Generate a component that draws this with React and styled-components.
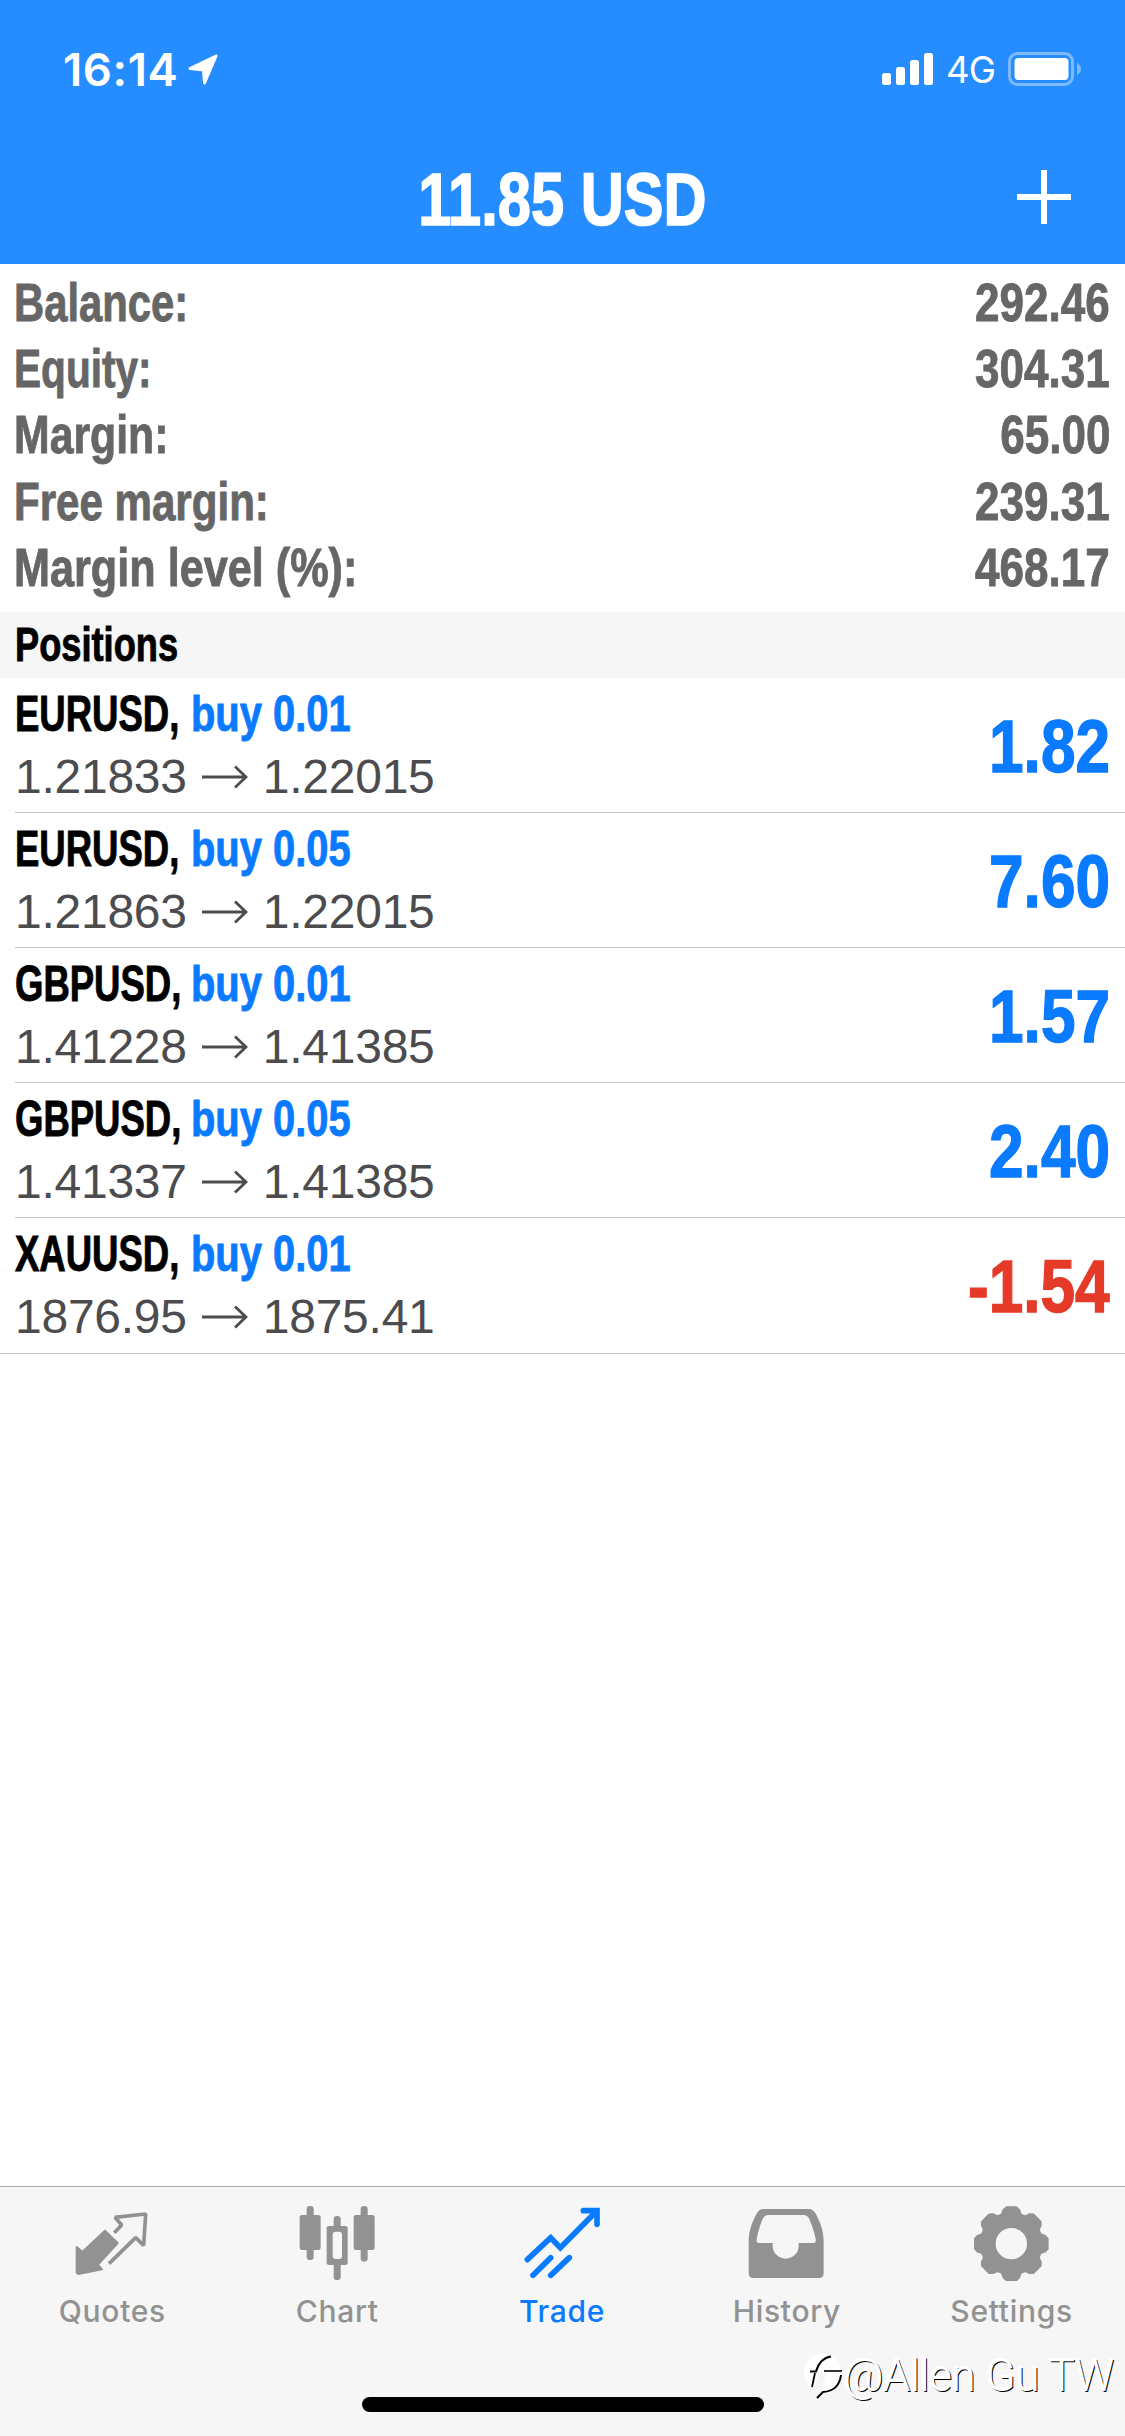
import styled, { createGlobalStyle } from "styled-components";

// stretch: horizontal squeeze of the label, the account font is a condensed bold
const summary = [
  { label: "Balance:", value: "292.46", stretch: 0.767 },
  { label: "Equity:", value: "304.31", stretch: 0.745 },
  { label: "Margin:", value: "65.00", stretch: 0.785 },
  { label: "Free margin:", value: "239.31", stretch: 0.772 },
  { label: "Margin level (%):", value: "468.17", stretch: 0.793 },
];

const positions = [
  { symbol: "EURUSD", side: "buy 0.01", open: "1.21833", current: "1.22015", profit: "1.82" },
  { symbol: "EURUSD", side: "buy 0.05", open: "1.21863", current: "1.22015", profit: "7.60" },
  { symbol: "GBPUSD", side: "buy 0.01", open: "1.41228", current: "1.41385", profit: "1.57" },
  { symbol: "GBPUSD", side: "buy 0.05", open: "1.41337", current: "1.41385", profit: "2.40" },
  { symbol: "XAUUSD", side: "buy 0.01", open: "1876.95", current: "1875.41", profit: "-1.54" },
];

// outline of the eight toothed wheel
const gearPath = () => {
  const points = [];
  for (let i = 0; i < 8; i++) {
    [[-18, 92], [-13, 104], [-8, 110], [8, 110], [13, 104], [18, 92]].forEach(([da, r]) => {
      const a = ((i * 45 + da) * Math.PI) / 180;
      points.push(`${(118 + r * Math.sin(a)).toFixed(1)} ${(122 - r * Math.cos(a)).toFixed(1)}`);
    });
  }
  return `M${points.join("L")}Z`;
};

const QuotesIcon = () => (
  <TabSvg viewBox="0 0 240 240">
    <path
      d="M14 132L31 147L99 83L137 120L78 185L90 199L19 213L14 209Z"
      fill="currentColor"
      stroke="currentColor"
      strokeWidth="6"
      strokeLinejoin="round"
    />
    <path d="M127 89L149 66L129 43L221 33L215 127L191 104L111 182" fill="none" stroke="currentColor" strokeWidth="11" strokeLinejoin="bevel" />
  </TabSvg>
);

const ChartIcon = () => (
  <TabSvg viewBox="0 0 240 240" fill="currentColor">
    <rect x="29" y="9" width="21" height="162" rx="10" />
    <rect x="8" y="36" width="63" height="105" rx="7" />
    <rect x="191" y="9" width="21" height="167" rx="10" />
    <rect x="170" y="36" width="63" height="105" rx="7" />
    <rect x="110" y="39" width="21" height="192" rx="10" />
    <rect x="89" y="69" width="63" height="117" rx="7" />
    <rect x="107" y="86" width="28" height="82" rx="9" fill="#f6f6f6" />
  </TabSvg>
);

const TradeIcon = () => (
  <TabSvg viewBox="0 0 240 240" fill="none" stroke="currentColor" strokeWidth="17" strokeLinecap="round">
    <path d="M16 170L86 104L115 134L222 26" />
    <path d="M184 23H225V64" />
    <path d="M33 217L86 164" />
    <path d="M86 217L142 164" />
  </TabSvg>
);

const HistoryIcon = () => (
  <TabSvg viewBox="0 0 240 240">
    <path
      fill="currentColor"
      fillRule="evenodd"
      d="M5 115C5 80 18 52 30 30Q37 18 50 18H185Q197 18 205 30C217 52 230 80 230 115V210Q230 225 216 225H19Q5 225 5 210ZM35 120Q27 120 29 108C33 86 38 70 46 50Q52 36 64 36H170Q182 36 188 50C196 70 202 88 206 108Q208 120 200 120H155V128A39 39 0 0 1 77 128V120Z"
    />
  </TabSvg>
);

const SettingsIcon = () => (
  <TabSvg viewBox="0 0 240 240">
    <path d={gearPath()} fill="currentColor" stroke="currentColor" strokeWidth="6" strokeLinejoin="round" />
    <circle cx="118" cy="122" r="47" fill="#f6f6f6" />
  </TabSvg>
);

const tabs = [
  { label: "Quotes", icon: <QuotesIcon /> },
  { label: "Chart", icon: <ChartIcon /> },
  { label: "Trade", icon: <TradeIcon />, active: true },
  { label: "History", icon: <HistoryIcon /> },
  { label: "Settings", icon: <SettingsIcon /> },
];

export default function App() {
  return (
    <Screen>
      <GlobalStyle />
      <Header>
        <StatusBar>
          <Clock>16:14</Clock>
          <svg width="30" height="31" viewBox="0 0 30 31">
            <path d="M28 2L2 14.500L15.500 16L16.500 29Z" fill="#fff" stroke="#fff" strokeWidth="3" strokeLinejoin="round" />
          </svg>
          <StatusRight>
            <svg width="52" height="32" viewBox="0 0 52 32" fill="#fff">
              <rect x="0" y="20" width="9" height="12" rx="2.500" />
              <rect x="14" y="14" width="9" height="18" rx="2.500" />
              <rect x="28" y="7" width="9" height="25" rx="2.500" />
              <rect x="42" y="0" width="9" height="32" rx="2.500" />
            </svg>
            <Network>4G</Network>
            <svg width="75" height="34" viewBox="0 0 75 34">
              <rect x="1.500" y="1.500" width="63" height="31" rx="8" fill="none" stroke="#7cb9ff" strokeWidth="3" />
              <rect x="6.500" y="6" width="54" height="22" rx="4" fill="#fff" />
              <path d="M69 11Q73 13 73 17T69 23Z" fill="#7cb9ff" />
            </svg>
          </StatusRight>
        </StatusBar>
        <NavBar>
          <Title>11.85 USD</Title>
          <AddButton aria-label="New order">
            <svg width="54" height="54" viewBox="0 0 54 54">
              <path d="M27 0V54M0 27H54" stroke="#fff" strokeWidth="6" />
            </svg>
          </AddButton>
        </NavBar>
      </Header>

      <Summary>
        {summary.map((row) => (
          <SummaryRow key={row.label}>
            <SummaryLabel $stretch={row.stretch}>{row.label}</SummaryLabel>
            <SummaryValue>{row.value}</SummaryValue>
          </SummaryRow>
        ))}
      </Summary>

      <SectionHeader>
        <SectionTitle>Positions</SectionTitle>
      </SectionHeader>
      <PositionList>
        {positions.map((p) => (
          <PositionRow key={p.symbol + p.open}>
            <div>
              <Deal>
                <Symbol>{p.symbol},</Symbol>
                <Side>{p.side}</Side>
              </Deal>
              <Prices>
                {p.open}
                <Arrow viewBox="0 0 46 24">
                  <path d="M0 12H44M33 1.500L44 12L33 22.500" fill="none" stroke="currentColor" strokeWidth="2.800" />
                </Arrow>
                {p.current}
              </Prices>
            </div>
            <Profit $loss={p.profit.startsWith("-")}>{p.profit}</Profit>
          </PositionRow>
        ))}
      </PositionList>

      <TabBar>
        <Tabs>
          {tabs.map((tab) => (
            <Tab key={tab.label} $active={tab.active}>
              {tab.icon}
              <span>{tab.label}</span>
            </Tab>
          ))}
        </Tabs>
        <HomeIndicator />
      </TabBar>

      <Watermark>
        <svg width="40" height="48" viewBox="0 0 40 48">
          <circle cx="19" cy="19.500" r="19" fill="#fff" />
          <path d="M14 34L13 45L26 36Z" fill="#fff" />
          <path d="M15 19L22 19L18 38L13 43L10 35Z" fill="#f6f6f6" />
          <path d="M6 18.500H12Q16 5 27 3.500" fill="none" stroke="#000" strokeWidth="2" />
          <path d="M20 18H38" stroke="#000" strokeWidth="1.600" />
          <path d="M11 20L8 34" stroke="#000" strokeWidth="1.800" />
          <path d="M37 22Q35 38 19 39L13 45" fill="none" stroke="#000" strokeWidth="2" />
        </svg>
        <span>@Allen Gu TW</span>
      </Watermark>
    </Screen>
  );
}

const GlobalStyle = createGlobalStyle`
  * {
    box-sizing: border-box;
  }

  body {
    margin: 0;
    background-color: #fff;
  }
`;

const Screen = styled.div`
  position: relative;
  display: flex;
  flex-direction: column;
  width: 1125px;
  height: 2436px;
  overflow: hidden;
  background-color: #fff;
  font-family: "Liberation Sans", Arial, sans-serif;
`;

const Header = styled.header`
  height: 264px;
  background-color: #258dff;
  color: #fff;
`;

const StatusBar = styled.div`
  display: flex;
  align-items: center;
  height: 138px;
  padding: 0 42px 0 63px;
  font-family: Inter, sans-serif;
`;

const Clock = styled.span`
  width: 125px;
  font-size: 45.5px;
  font-weight: 600;
  letter-spacing: 0.6px;
  white-space: nowrap;
`;

const StatusRight = styled.div`
  display: flex;
  align-items: center;
  margin-left: auto;
`;

const Network = styled.span`
  width: 62px;
  margin: 2px 0 0 12px;
  font-size: 36.5px;
  letter-spacing: -0.8px;
`;

const NavBar = styled.div`
  display: grid;
  grid-template-columns: 1fr auto 1fr;
  align-items: center;
  height: 118px;
  padding: 0 53px;
`;

const Title = styled.h1`
  grid-column: 2;
  margin: 4px 0 0;
  font-size: 75px;
  line-height: 84px;
  white-space: nowrap;
  transform: scaleX(0.795);
  -webkit-text-stroke: 1.6px currentColor;
`;

const AddButton = styled.button`
  justify-self: end;
  display: flex;
  margin-right: 1px;
  padding: 0;
  border: none;
  background: none;
`;

const Summary = styled.section`
  height: 348px;
  padding: 6px 15px 0 14px;
  font-weight: bold;
  color: #666;
`;

const SummaryRow = styled.div`
  display: flex;
  justify-content: space-between;
  font-size: 54.5px;
  line-height: 66.2px;
  -webkit-text-stroke: 0.9px currentColor;
`;

const SummaryLabel = styled.span`
  transform: scaleX(${({ $stretch }) => $stretch});
  transform-origin: left;
`;

const SummaryValue = styled.span`
  transform: scaleX(0.808);
  transform-origin: right;
`;

const SectionHeader = styled.div`
  display: flex;
  height: 66px;
  padding-left: 15px;
  background-color: #f6f6f6;
`;

const SectionTitle = styled.h2`
  margin: 0;
  color: #000;
  font-size: 48px;
  line-height: 65px;
  transform: scaleX(0.755);
  transform-origin: left;
  -webkit-text-stroke: 0.9px currentColor;
`;

const PositionList = styled.ul`
  margin: 0;
  padding: 0;
  list-style: none;
  border-bottom: 1px solid #c4c4c8;
`;

const PositionRow = styled.li`
  display: flex;
  justify-content: space-between;
  align-items: center;
  height: 135px;
  margin-left: 15px;
  padding-right: 15px;
  border-bottom: 1px solid #c4c4c8;

  &:last-child {
    border-bottom: none;
  }
`;

const Deal = styled.div`
  display: flex;
  font-size: 50px;
  font-weight: bold;
  line-height: 63px;
  white-space: nowrap;
  -webkit-text-stroke: 0.9px currentColor;
`;

const Symbol = styled.span`
  width: 176px;
  color: #000;
  transform: scaleX(0.73);
  transform-origin: 0 50%;
`;

const Side = styled.span`
  color: #0a7aff;
  transform: scaleX(0.798);
  transform-origin: 0 50%;
`;

const Prices = styled.div`
  display: flex;
  align-items: center;
  color: #4c4c4e;
  font-size: 48px;
  line-height: 62px;
  letter-spacing: -0.25px;
`;

const Arrow = styled.svg`
  width: 46px;
  height: 24px;
  margin: 0 15px;
`;

const Profit = styled.span`
  margin-top: 2px;
  color: ${({ $loss }) => ($loss ? "#e63a28" : "#0a7aff")};
  font-size: 74px;
  font-weight: bold;
  transform: scaleX(0.84);
  transform-origin: right;
  -webkit-text-stroke: 1.4px currentColor;
`;

const TabBar = styled.nav`
  height: 250px;
  margin-top: auto;
  border-top: 1px solid #a9a9a9;
  background-color: #f6f6f6;
`;

const Tabs = styled.div`
  display: grid;
  grid-template-columns: repeat(5, 1fr);
  height: 210px;
  padding: 16px 1px 0 0;
`;

const Tab = styled.div`
  display: flex;
  flex-direction: column;
  align-items: center;
  color: ${({ $active }) => ($active ? "#0a7aff" : "#929292")};
  font-family: Inter, sans-serif;
  font-size: 30px;
  font-weight: 500;
  line-height: 36px;
  letter-spacing: 0.7px;

  span {
    margin-top: 10px;
  }
`;

const TabSvg = styled.svg`
  width: 80px;
  height: 80px;
`;

const HomeIndicator = styled.div`
  width: 402px;
  height: 15px;
  margin: 0 auto;
  border-radius: 8px;
  background-color: #000;
`;

const Watermark = styled.div`
  position: absolute;
  right: 11px;
  bottom: 33px;
  display: flex;
  align-items: center;
  color: #fff;
  font-family: Roboto, sans-serif;
  font-size: 43.5px;
  font-weight: 300;
  line-height: 52px;
  letter-spacing: -0.15px;
  text-shadow: -1px -1px 0 #fff, 1px 1px 0 #000;
`;
